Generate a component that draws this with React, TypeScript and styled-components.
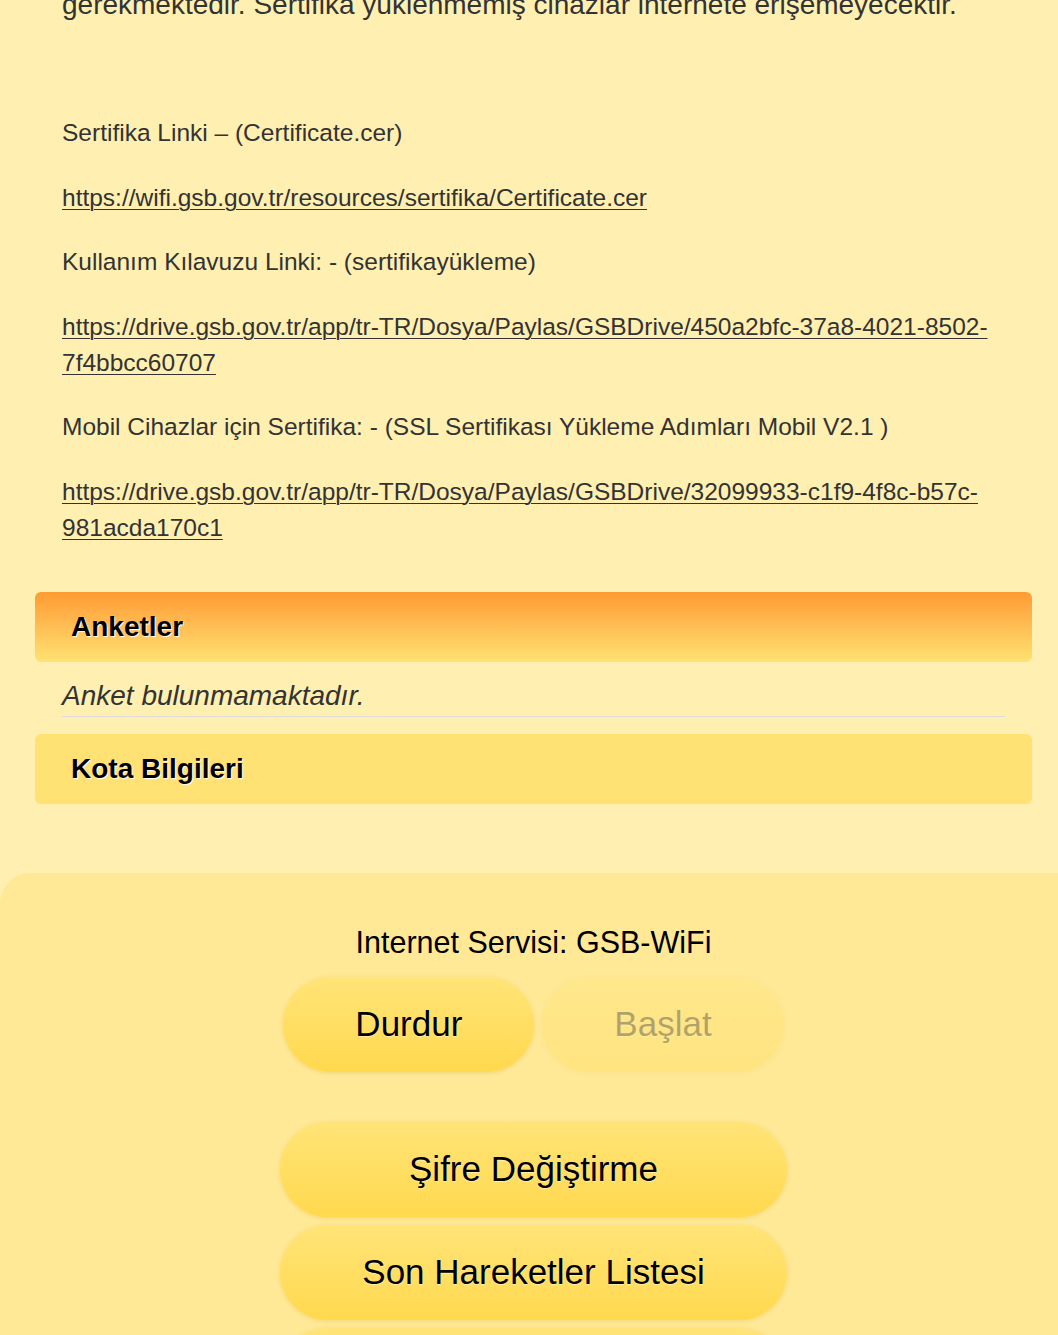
import React from 'react'
import styled, { createGlobalStyle } from 'styled-components'

const colors = {
  page: '#ffefb1',
  panel: '#ffe996',
  text: '#333333',
  ink: '#000000',
  rule: '#dcdcdc',
  kota: '#ffe174'
}

const GlobalStyle = createGlobalStyle`
  html, body {
    margin: 0;
    padding: 0;
    background: ${colors.page};
    font-family: "Liberation Sans", Arial, sans-serif;
    color: ${colors.text};
    overflow: hidden;
  }
`

const Page = styled.div`
  display: flex;
  flex-direction: column;
  min-height: 1335px;
`

// the page is scrolled: the first line of the notice is cut at the top
const Content = styled.div`
  margin: -16.5px 26px 0 35px;
  display: flex;
  flex-direction: column;
`

const Article = styled.div`
  padding: 0 27px 46px;
`

const Para = styled.p<{ $lead?: boolean; $last?: boolean }>`
  margin: 0 0 ${(p) => (p.$last ? '0' : p.$lead ? '25px' : '28.5px')};
  font-size: ${(p) => (p.$lead ? '28px' : '24.5px')};
  line-height: ${(p) => (p.$lead ? '42px' : '36px')};
  color: ${colors.text};
`

const Link = styled.a`
  color: ${colors.text};
  text-decoration: underline;
  text-underline-offset: 3px;
  text-decoration-thickness: 1px;
`

const SectionHeader = styled.div<{ $active?: boolean }>`
  height: 70px;
  display: flex;
  align-items: center;
  padding: 0 36px;
  border-radius: 6px;
  background: ${(p) =>
    p.$active
      ? 'linear-gradient(to bottom, #ff9b33 0%, #ffc257 55%, #ffe273 100%)'
      : colors.kota};
  font-size: 28px;
  font-weight: 700;
  color: ${colors.ink};
  text-shadow: 1px 1px 1px #ffffff;
`

const EmptyNote = styled.p`
  margin: 13px 27px 17px;
  font-size: 28px;
  line-height: 41px;
  font-style: italic;
  color: ${colors.text};
  border-bottom: 1px solid ${colors.rule};
`

const Panel = styled.section`
  margin-top: 69px;
  flex: 1;
  background: ${colors.panel};
  border-top-left-radius: 30px;
  display: flex;
  flex-direction: column;
  align-items: center;
  padding: 51px 0 0 9px;
`

const ServiceLabel = styled.div`
  font-size: 30.5px;
  line-height: 36px;
  color: ${colors.ink};
  margin-bottom: 17px;
`

const ButtonRow = styled.div`
  display: flex;
  gap: 8px;
  margin-bottom: 50px;
`

const ButtonStack = styled.div`
  display: flex;
  flex-direction: column;
  gap: 8px;
`

const PillButton = styled.button<{ $disabled?: boolean; $wide?: boolean }>`
  height: 95px;
  ${(p) => (p.$wide ? 'width: 507px;' : 'padding: 0 72px;')}
  border: none;
  border-radius: 48px;
  background: linear-gradient(to bottom, #ffe478 0%, #ffd94e 100%);
  box-shadow: 0 1px 4px rgba(200, 160, 40, 0.25);
  font-family: "Liberation Sans", Arial, sans-serif;
  font-size: 35px;
  color: ${colors.ink};
  text-shadow: 0 1px 1px rgba(255, 255, 255, 0.5);
  opacity: ${(p) => (p.$disabled ? 0.3 : 1)};
  cursor: pointer;
`

const App = () => {
  return (
    <Page>
      <GlobalStyle />
      <Content>
        <Article>
          <Para $lead>gerekmektedir. Sertifika yüklenmemiş cihazlar internete erişemeyecektir.</Para>
          <Para>&nbsp;</Para>
          <Para>Sertifika Linki – (Certificate.cer)</Para>
          <Para>
            <Link href="#">https://wifi.gsb.gov.tr/resources/sertifika/Certificate.cer</Link>
          </Para>
          <Para>Kullanım Kılavuzu Linki: - (sertifikayükleme)</Para>
          <Para>
            <Link href="#">
              https://drive.gsb.gov.tr/app/tr-TR/Dosya/Paylas/GSBDrive/450a2bfc-37a8-4021-8502-<wbr />7f4bbcc60707
            </Link>
          </Para>
          <Para>Mobil Cihazlar için Sertifika: - (SSL Sertifikası Yükleme Adımları Mobil V2.1 )</Para>
          <Para $last>
            <Link href="#">
              https://drive.gsb.gov.tr/app/tr-TR/Dosya/Paylas/GSBDrive/32099933-c1f9-4f8c-b57c-<wbr />981acda170c1
            </Link>
          </Para>
        </Article>
        <SectionHeader $active>Anketler</SectionHeader>
        <EmptyNote>Anket bulunmamaktadır.</EmptyNote>
        <SectionHeader>Kota Bilgileri</SectionHeader>
      </Content>
      <Panel>
        <ServiceLabel>Internet Servisi: GSB-WiFi</ServiceLabel>
        <ButtonRow>
          <PillButton>Durdur</PillButton>
          <PillButton $disabled>Başlat</PillButton>
        </ButtonRow>
        <ButtonStack>
          <PillButton $wide>Şifre Değiştirme</PillButton>
          <PillButton $wide>Son Hareketler Listesi</PillButton>
          <PillButton $wide>Kullanım Bilgileri</PillButton>
        </ButtonStack>
      </Panel>
    </Page>
  )
}

export default App
